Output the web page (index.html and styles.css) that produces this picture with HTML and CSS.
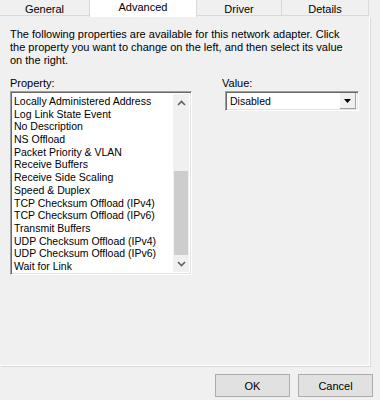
FILE: index.html
```html
<!DOCTYPE html>
<html lang="en">
<head>
    <meta charset="UTF-8">
    <title>Advanced</title>
    <link rel="stylesheet" href="styles.css">
</head>
<body>
    <div class="dialog">
        <ul class="tabs">
            <li class="tab tab-general">General</li>
            <li class="tab tab-advanced active">Advanced</li>
            <li class="tab tab-driver">Driver</li>
            <li class="tab tab-details">Details</li>
        </ul>
        <div class="page">
            <p class="intro">The following properties are available for this network adapter. Click<br>
                the property you want to change on the left, and then select its value<br>
                on the right.</p>
            <div class="fields">
                <div class="prop">
                    <label class="label">Property:</label>
                    <div class="listbox">
                        <ul class="items">
                            <li>Locally Administered Address</li>
                            <li>Log Link State Event</li>
                            <li>No Description</li>
                            <li>NS Offload</li>
                            <li>Packet Priority &amp; VLAN</li>
                            <li>Receive Buffers</li>
                            <li>Receive Side Scaling</li>
                            <li>Speed &amp; Duplex</li>
                            <li>TCP Checksum Offload (IPv4)</li>
                            <li>TCP Checksum Offload (IPv6)</li>
                            <li>Transmit Buffers</li>
                            <li>UDP Checksum Offload (IPv4)</li>
                            <li>UDP Checksum Offload (IPv6)</li>
                            <li>Wait for Link</li>
                        </ul>
                        <div class="scrollbar">
                            <div class="arrow">
                                <svg width="9" height="6" viewBox="0 0 9 6"><polyline points="1,5 4.5,1.5 8,5" fill="none" stroke="#606060" stroke-width="1.6"/></svg>
                            </div>
                            <div class="track"><div class="thumb"></div></div>
                            <div class="arrow">
                                <svg width="9" height="6" viewBox="0 0 9 6"><polyline points="1,1 4.5,4.5 8,1" fill="none" stroke="#606060" stroke-width="1.6"/></svg>
                            </div>
                        </div>
                    </div>
                </div>
                <div class="value">
                    <label class="label">Value:</label>
                    <div class="combo">
                        <span class="combo-text">Disabled</span>
                        <span class="combo-btn">
                            <svg width="7" height="4" viewBox="0 0 7 4"><polygon points="0,0 7,0 3.5,4" fill="#000"/></svg>
                        </span>
                    </div>
                </div>
            </div>
        </div>
        <div class="buttons">
            <button class="btn">OK</button>
            <button class="btn">Cancel</button>
        </div>
    </div>
</body>
</html>
```

FILE: styles.css
```css
body{
    margin:0;
    background:#f0f0f0;
    font-family:"Liberation Sans", Arial, sans-serif;
    font-size:11px;
    color:#000;
}
ul{
    margin:0;
    padding:0;
}
li{
    list-style:none;
}
.dialog{
    width:380px;
    height:400px;
    overflow:hidden;
}

/* tabs */
.tabs{
    display:flex;
    height:17px;
}
.tab{
    height:16px;
    line-height:18px;
    text-align:center;
    background:#f0f0f0;
    border-right:1px solid #d9d9d9;
    border-bottom:1px solid #d9d9d9;
    box-sizing:border-box;
}
.tab-general{ width:90px; }
.tab-advanced{ width:108px; }
.tab-driver{ width:85px; }
.tab-details{ width:87px; }
.tab.active{
    height:17px;
    line-height:14px;
    background:#fff;
    border-bottom:none;
    border-left:1px solid #d9d9d9;
    margin-left:-1px;
}

/* page */
.page{
    width:370px;
    height:349px;
    border-right:1px solid #fff;
    border-bottom:1px solid #fff;
    box-shadow:1px 1px 0 #d9d9d9;
    padding:11px 10px 0 10px;
    box-sizing:border-box;
}
.intro{
    margin:0;
    line-height:13px;
    white-space:nowrap;
}
.fields{
    display:flex;
    margin-top:9px;
}
.label{
    display:block;
    height:15px;
    line-height:15px;
}
.prop{
    width:182px;
}
.value{
    margin-left:30px;
}

/* listbox */
.listbox{
    display:flex;
    height:184px;
    border-top:1px solid #a0a0a0;
    border-left:1px solid #a0a0a0;
    border-right:1px solid #fff;
    border-bottom:1px solid #fff;
    box-shadow:inset 1px 1px 0 #696969, inset -1px -1px 0 #e3e3e3;
    background:#fff;
    box-sizing:border-box;
    padding:2px 2px 2px 3px;
}
.items{
    flex:1;
    padding-top:1px;
    font-size:10.5px;
}
.items li{
    height:12.7px;
    line-height:12.7px;
    white-space:nowrap;
}
.scrollbar{
    width:16px;
    display:flex;
    flex-direction:column;
    background:#f0f0f0;
}
.arrow{
    height:17px;
    display:flex;
    align-items:center;
    justify-content:center;
}
.track{
    flex:1;
    display:flex;
    flex-direction:column;
    justify-content:flex-end;
}
.thumb{
    height:84px;
    margin:0 1px;
    background:#cdcdcd;
}

/* combo */
.combo{
    display:flex;
    align-items:center;
    width:134px;
    height:20px;
    margin-left:3px;
    background:#fff;
    border-top:1px solid #a0a0a0;
    border-left:1px solid #a0a0a0;
    border-right:1px solid #fff;
    border-bottom:1px solid #fff;
    box-shadow:inset 1px 1px 0 #696969, inset -1px -1px 0 #e3e3e3;
    box-sizing:border-box;
    padding:2px;
}
.combo-text{
    flex:1;
    padding-left:2px;
    font-size:10.5px;
}
.combo-btn{
    width:16px;
    height:16px;
    display:flex;
    align-items:center;
    justify-content:center;
    background:#f0f0f0;
    border-right:1px solid #a0a0a0;
    border-bottom:1px solid #a0a0a0;
    box-sizing:border-box;
}

/* buttons */
.buttons{
    display:flex;
    justify-content:flex-end;
    gap:8px;
    padding:8px 7px 0 0;
}
.btn{
    width:75px;
    height:23px;
    background:#e1e1e1;
    border:1px solid #adadad;
    font-family:"Liberation Sans", Arial, sans-serif;
    font-size:11px;
    color:#000;
    padding:0;
}
```
